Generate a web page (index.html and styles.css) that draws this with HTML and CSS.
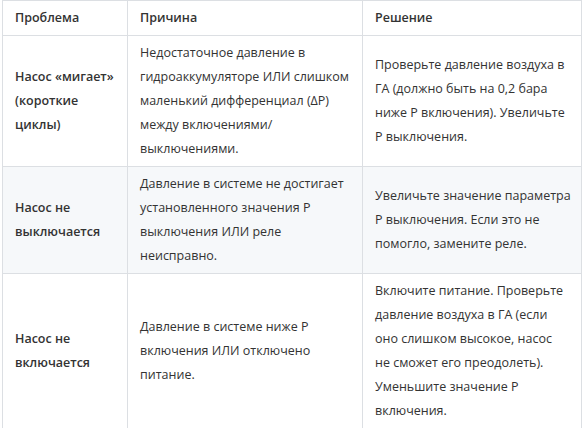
FILE: index.html
```html
<!DOCTYPE html>
<html lang="ru">
<head>
<meta charset="utf-8">
<link rel="stylesheet" href="styles.css">
</head>
<body>
<div class="wrap">
<table class="tbl">
  <colgroup>
    <col class="c1">
    <col class="c2">
    <col class="c3">
  </colgroup>
  <thead>
    <tr><th>Проблема</th><th>Причина</th><th>Решение</th></tr>
  </thead>
  <tbody>
    <tr>
      <td class="prob">Насос «мигает» (короткие циклы)</td>
      <td>Недостаточное давление в гидроаккумуляторе ИЛИ слишком маленький дифференциал (ΔP) между включениями/ выключениями.</td>
      <td>Проверьте давление воздуха в ГА (должно быть на 0,2 бара ниже P включения). Увеличьте P выключения.</td>
    </tr>
    <tr class="alt">
      <td class="prob">Насос не выключается</td>
      <td>Давление в системе не достигает установленного значения P выключения ИЛИ реле неисправно.</td>
      <td>Увеличьте значение параметра P выключения. Если это не помогло, замените реле.</td>
    </tr>
    <tr>
      <td class="prob">Насос не включается</td>
      <td>Давление в системе ниже P включения ИЛИ отключено питание.</td>
      <td>Включите питание. Проверьте давление воздуха в ГА (если оно слишком высокое, насос не&nbsp;сможет его преодолеть). Уменьшите значение P включения.</td>
    </tr>
  </tbody>
</table>
</div>
</body>
</html>
```
FILE: styles.css
```css
html, body {
  margin: 0;
  padding: 0;
  background: #ffffff;
}
.wrap {
  padding: 0 2px 0 2px;
}
.tbl {
  width: 579px;
  table-layout: fixed;
  border-collapse: collapse;
  font-family: "Open Sans", "Noto Sans", sans-serif;
  font-size: 12.5px;
  line-height: 24px;
  color: #333333;
}
.c1 { width: 125px; }
.c2 { width: 235px; }
.c3 { width: 219px; }
.tbl th,
.tbl td {
  border: 1px solid #dcdfe3;
  padding: 5px 10px 5px 12px;
  text-align: left;
  vertical-align: middle;
}
.tbl th {
  font-weight: 600;
}
.tbl td.prob {
  font-weight: 600;
}
.tbl tr.alt td {
  background: #f6f8fa;
}
```
